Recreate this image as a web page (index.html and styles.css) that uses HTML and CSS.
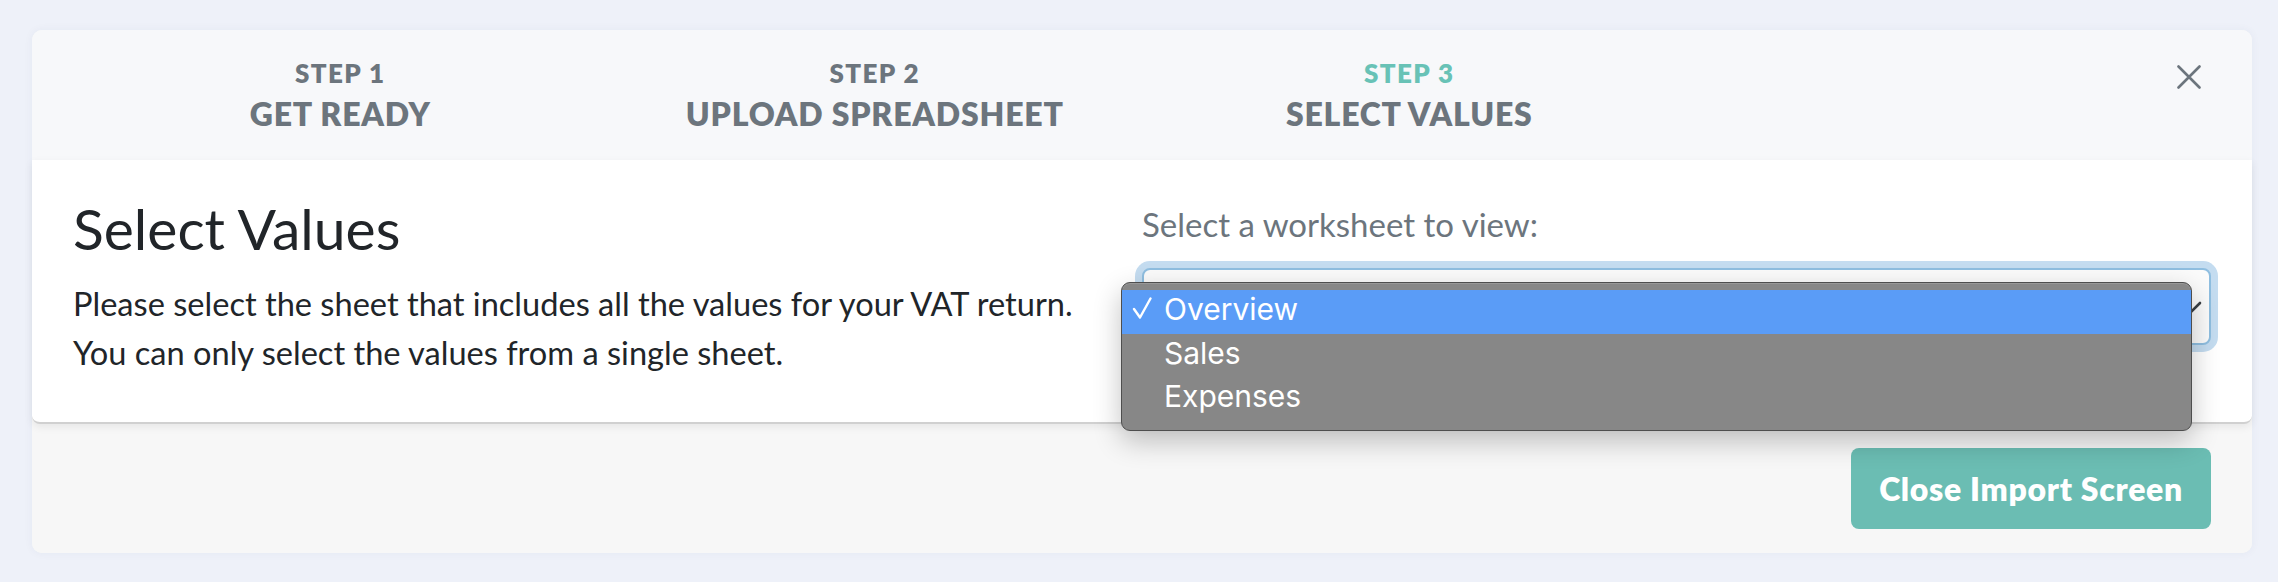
FILE: index.html
```html
<!DOCTYPE html>
<html lang="en">
<head>
<meta charset="utf-8">
<title>Import - Select Values</title>
<link rel="stylesheet" href="styles.css">
</head>
<body>
<div class="card">
  <div class="steps">
    <div class="step">
      <div class="step-num">STEP 1</div>
      <div class="step-title">GET READY</div>
    </div>
    <div class="step">
      <div class="step-num">STEP 2</div>
      <div class="step-title">UPLOAD SPREADSHEET</div>
    </div>
    <div class="step active">
      <div class="step-num">STEP 3</div>
      <div class="step-title">SELECT VALUES</div>
    </div>
    <div class="step-close">
      <button class="close" aria-label="Close">
        <svg width="24" height="24" viewBox="0 0 24 24"><path d="M1.5 1.5 L22.5 22.5 M22.5 1.5 L1.5 22.5" stroke="#6c757d" stroke-width="2.6" stroke-linecap="round" fill="none"/></svg>
      </button>
    </div>
  </div>

  <div class="content">
    <div class="intro">
      <h3 class="title">Select Values</h3>
      <p class="text">Please select the sheet that includes all the values for your VAT return.</p>
      <p class="text">You can only select the values from a single sheet.</p>
    </div>
    <div class="picker">
      <label class="label">Select a worksheet to view:</label>
      <div class="select-wrap">
        <div class="select">
          <svg class="chevron" width="24" height="14" viewBox="0 0 24 14"><path d="M2 2 L12 12 L22 2" stroke="#3a3f44" stroke-width="2.6" stroke-linecap="round" fill="none"/></svg>
        </div>
        <ul class="popup">
          <li class="opt selected"><svg class="check" width="20" height="22" viewBox="0 0 20 22"><path d="M2 12 L8 20.5 L18.5 1.5" stroke="#ffffff" stroke-width="2.4" stroke-linecap="round" stroke-linejoin="round" fill="none"/></svg>Overview</li>
          <li class="opt">Sales</li>
          <li class="opt">Expenses</li>
        </ul>
      </div>
    </div>
  </div>

  <div class="footer">
    <button class="btn">Close Import Screen</button>
  </div>
</div>
</body>
</html>
```

FILE: styles.css
```css
* { box-sizing: border-box; }

html, body {
  margin: 0;
  padding: 0;
}

body {
  background: #eef1f9;
  width: 2278px;
  height: 582px;
  overflow: hidden;
  font-family: "Lato", "Open Sans", sans-serif;
  color: #212529;
}

.card {
  margin: 30px 0 0 32px;
  width: 2220px;
  border-radius: 10px;
  background: #f7f7f7;
  box-shadow: 0 0 10px rgba(40, 50, 90, 0.05);
}

/* ---------- steps header ---------- */
.steps {
  height: 130px;
  background: #f7f8fa;
  border-radius: 10px 10px 0 0;
  display: grid;
  grid-template-columns: repeat(4, 1fr);
  padding: 0 41px;
}

.step {
  text-align: center;
  padding-top: 28px;
  color: #6c757d;
  font-weight: 800;
}

.step-num {
  font-size: 26px;
  line-height: 30px;
  letter-spacing: 1.4px;
}

.step-title {
  font-size: 32px;
  line-height: 40px;
  margin-top: 6px;
  letter-spacing: 0.8px;
}

.step.active .step-num {
  color: #68c2b6;
}

.step-close {
  display: flex;
  justify-content: flex-end;
  align-items: flex-start;
  padding: 35px 10px 0 0;
}

.close {
  border: 0;
  background: transparent;
  padding: 0;
  width: 24px;
  height: 24px;
  display: block;
}

.close svg { display: block; }

/* ---------- content ---------- */
.content {
  position: relative;
  z-index: 2;
  height: 264px;
  background: #ffffff;
  border-bottom: 2px solid #d0d0d0;
  border-radius: 0 0 8px 8px;
  box-shadow: 0 3px 8px rgba(0, 0, 0, 0.07);
  padding: 0 41px;
  display: grid;
  grid-template-columns: 1fr 1fr;
}

.title {
  margin: 35px 0 17px;
  font-size: 57px;
  line-height: 67px;
  font-weight: 400;
  color: #212529;
}

.text {
  margin: 0;
  font-size: 32.6px;
  line-height: 49px;
  color: #212529;
}

.picker {
  padding-top: 40px;
}

.label {
  display: block;
  font-size: 33px;
  line-height: 48px;
  color: #6c757d;
  margin-bottom: 20px;
}

.select-wrap {
  position: relative;
}

.select {
  height: 77px;
  background: #fbfbfb;
  border: 2px solid #8fbee0;
  border-radius: 8px;
  box-shadow: 0 0 0 7px #c4dcf0;
  display: flex;
  justify-content: flex-end;
  align-items: center;
  padding-right: 7px;
}

.chevron { display: block; margin-top: 3px; }

/* native-looking dropdown popup (overlay) */
.popup {
  position: absolute;
  left: -21px;
  top: 14px;
  width: 1071px;
  margin: 0;
  padding: 7px 0 9px;
  list-style: none;
  background: #878787;
  border: 1px solid #4e4e4e;
  border-radius: 9px;
  box-shadow: 0 10px 28px rgba(0, 0, 0, 0.24), inset 0 1px 0 rgba(255, 255, 255, 0.15);
  font-family: "Inter", "Roboto", sans-serif;
  font-size: 30px;
  color: #ffffff;
}

.opt {
  height: 43.5px;
  line-height: 39px;
  padding-left: 42px;
  position: relative;
}

.opt.selected {
  background: #5a9cf7;
}

.check {
  position: absolute;
  left: 10px;
  top: 7px;
}

/* ---------- footer ---------- */
.footer {
  height: 129px;
  padding: 24px 41px;
  display: flex;
  justify-content: flex-end;
  border-radius: 0 0 10px 10px;
  background: #f7f7f7;
}

.btn {
  height: 81px;
  padding: 0 28px;
  border: 0;
  border-radius: 8px;
  background: #6bbdb3;
  color: #ffffff;
  font-family: "Lato", "Open Sans", sans-serif;
  font-weight: 800;
  font-size: 32px;
  letter-spacing: 0.7px;
}
```
